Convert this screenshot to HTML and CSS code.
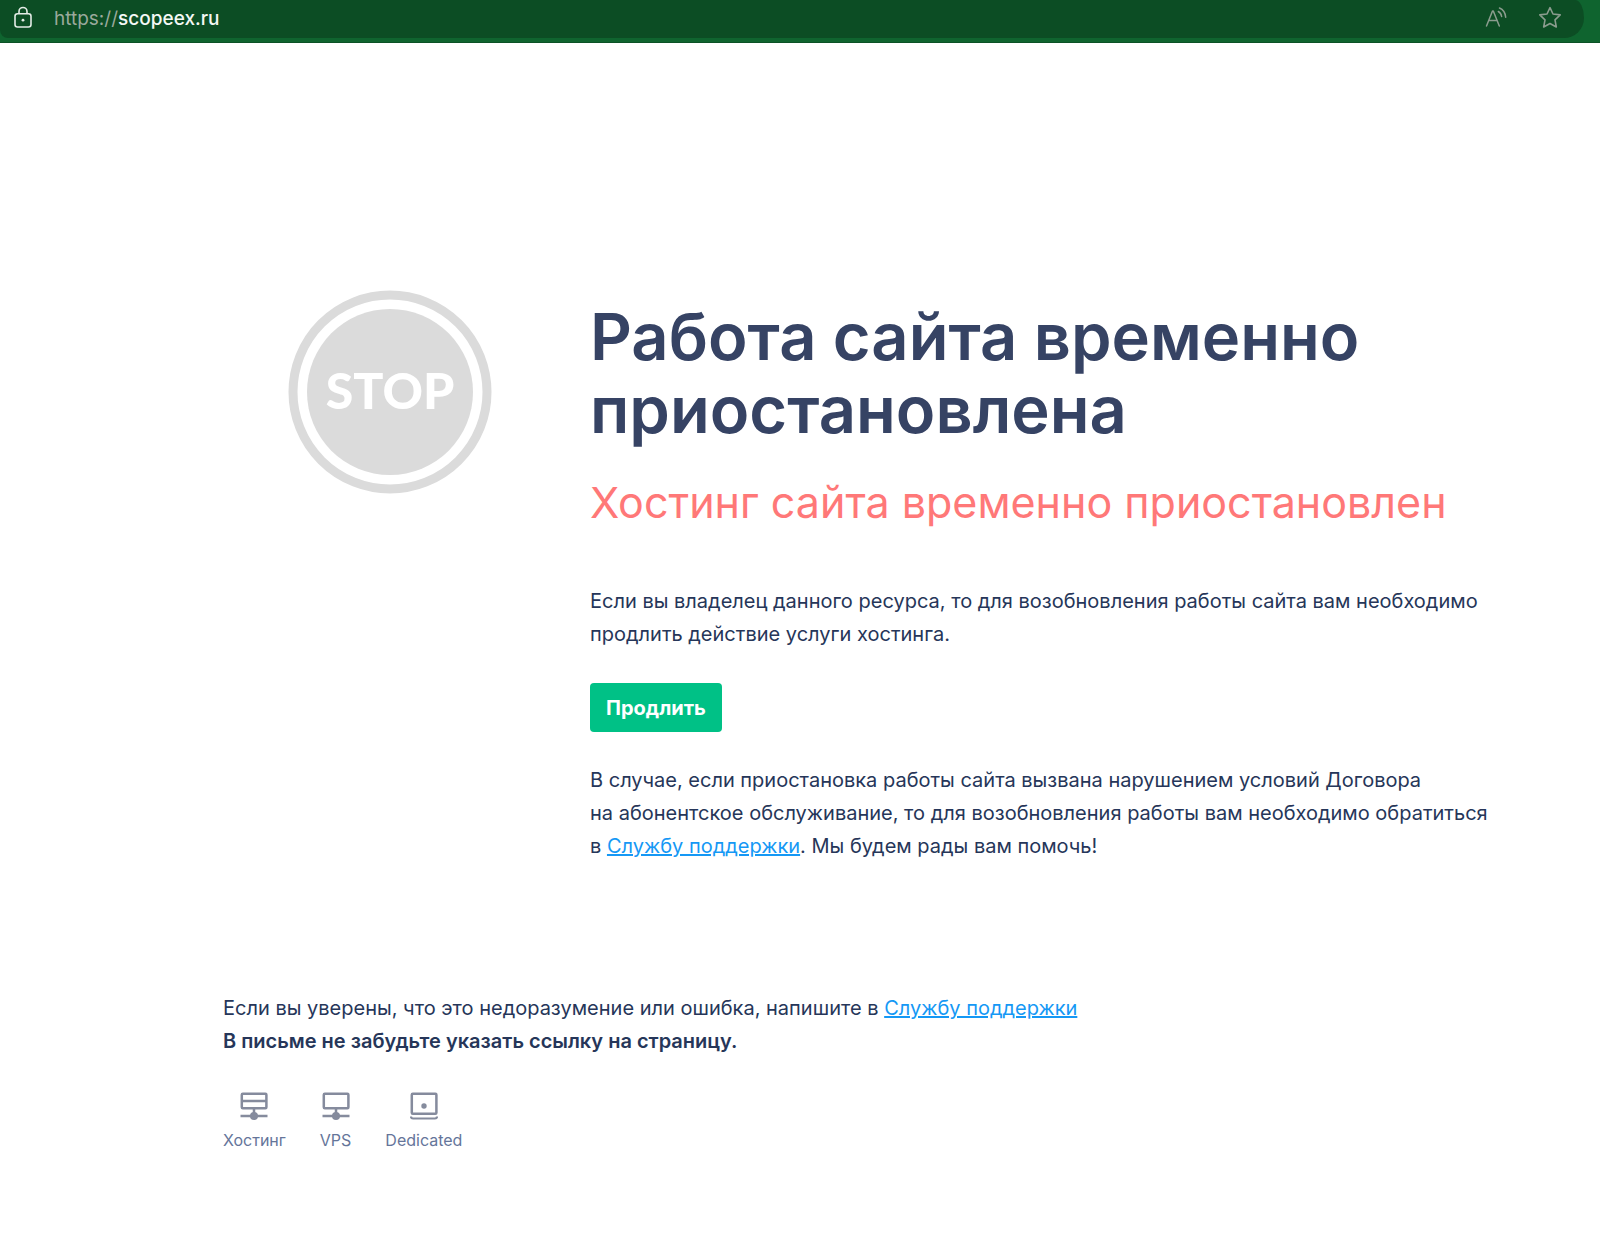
FILE: index.html
```
<!DOCTYPE html>
<html lang="ru">
<head>
<meta charset="utf-8">
<meta name="viewport" content="width=device-width, initial-scale=1">
<title>Работа сайта временно приостановлена</title>
<link rel="stylesheet" href="styles.css">
</head>
<body>
<header class="browser-bar">
  <div class="address">
    <svg class="lock" width="20" height="24" viewBox="0 0 20 24" fill="none" stroke="#e4ece6" stroke-width="1.6" aria-hidden="true">
      <rect x="2" y="7.800" width="16" height="13.200" rx="2.500"/>
      <path d="M6 7.800V5.500a4 4 0 0 1 8 0v2.300"/>
      <circle cx="10" cy="14.200" r="1.400" fill="#e4ece6" stroke="none"/>
    </svg>
    <span class="url"><span class="scheme">https://</span>scopeex.ru</span>
    <button class="tool" type="button" aria-label="Прочесть вслух">
      <svg width="24" height="24" viewBox="0 0 24 24" fill="none" stroke="#8b9c8e" stroke-width="1.500" stroke-linecap="round" stroke-linejoin="round" aria-hidden="true">
        <path d="M2.500 20 8.500 5h.8l6 15M4.700 14.500h8.400"/>
        <path d="M14.300 5.500c2 1 3 2.600 3.300 5M15.500 2c3.500 1.500 5.800 4.500 6.200 9.200"/>
      </svg>
    </button>
    <button class="tool" type="button" aria-label="Добавить в избранное">
      <svg width="24" height="24" viewBox="0 0 24 24" fill="none" stroke="#8b9c8e" stroke-width="1.600" stroke-linejoin="round" aria-hidden="true">
        <path d="M12 1.700l3 6.300 7.200.9-5.200 4.900 1.300 7.200L12 17.500l-6.300 3.500L7 13.800 1.800 8.900 9 8z"/>
      </svg>
    </button>
  </div>
</header>

<main class="page">
  <section class="notice">
    <svg class="stop" width="204" height="204" viewBox="0 0 204 204" role="img" aria-label="STOP">
      <circle cx="102" cy="102" r="97" fill="none" stroke="#dbdbdb" stroke-width="9"/>
      <circle cx="102" cy="102" r="83" fill="#dbdbdb"/>
      <text class="stop-text" x="102" y="119" text-anchor="middle">STOP</text>
    </svg>
    <div class="content">
      <h1 class="title">Работа сайта временно приостановлена</h1>
      <p class="subtitle">Хостинг сайта временно приостановлен</p>
      <p class="text">Если вы владелец данного ресурса, то для возобновления работы сайта вам необходимо продлить действие услуги хостинга.</p>
      <button class="renew" type="button">Продлить</button>
      <p class="text">В случае, если приостановка работы сайта вызвана нарушением условий Договора на&nbsp;абонентское обслуживание, то для возобновления работы вам необходимо обратиться в&nbsp;<a class="link" href="#">Службу поддержки</a>. Мы будем рады вам помочь!</p>
    </div>
  </section>

  <footer class="footer">
    <p class="text">Если вы уверены, что это недоразумение или ошибка, напишите в&nbsp;<a class="link" href="#">Службу поддержки</a><br><strong class="strong">В письме не забудьте указать ссылку на страницу.</strong></p>
    <nav class="services">
      <a class="service" href="#">
        <svg width="28" height="28" viewBox="0 0 28 28" fill="none" stroke="#858b9d" stroke-width="2.500" aria-hidden="true">
          <rect x="1.800" y="1.700" width="24.600" height="14.600" rx="1"/>
          <path d="M2 9h24M14 16v8M.5 24h27"/>
          <circle cx="14" cy="24" r="4" fill="#858b9d" stroke="none"/>
        </svg>
        Хостинг
      </a>
      <a class="service" href="#">
        <svg width="28" height="28" viewBox="0 0 28 28" fill="none" stroke="#858b9d" stroke-width="2.500" aria-hidden="true">
          <rect x="1.800" y="1.700" width="24.600" height="14.600" rx="1"/>
          <path d="M14 16v8M.5 24h27"/>
          <circle cx="14" cy="24" r="4" fill="#858b9d" stroke="none"/>
        </svg>
        VPS
      </a>
      <a class="service" href="#">
        <svg width="28" height="28" viewBox="0 0 28 28" fill="none" stroke="#858b9d" stroke-width="2.500" aria-hidden="true">
          <rect x="1.800" y="1.700" width="24.600" height="20" rx="1"/>
          <path d="M1 24.500q0 2 2 2h22q2 0 2-2" stroke-width="2.200"/>
          <circle cx="14" cy="14" r="2.700" fill="#858b9d" stroke="none"/>
        </svg>
        Dedicated
      </a>
    </nav>
  </footer>
</main>
</body>
</html>
```
FILE: styles.css
```
* {
  box-sizing: border-box;
}

body {
  margin: 0;
  background: #fff;
  color: #263659;
  font-family: Inter, "Liberation Sans", sans-serif;
}

.browser-bar {
  height: 43px;
  padding-right: 16px;
  background: #0f642f;
  border-bottom: 1px solid #0b5226;
}

.address {
  display: flex;
  align-items: center;
  height: 38px;
  padding: 0 22px 2px 13px;
  background: #0c4d24;
  border-radius: 0 9px 20px 8px / 0 18px 20px 8px;
}

.url {
  flex: 1;
  margin-left: 21px;
  color: #f4f8f5;
  font-size: 19px;
  font-weight: 500;
}

.scheme {
  color: #9aa99c;
  font-weight: 400;
}

.tool {
  display: flex;
  margin-left: 30px;
  padding: 0;
  border: 0;
  background: none;
}

.page {
  padding: 247px 88px 80px 223px;
}

.notice {
  display: flex;
  align-items: flex-start;
}

.stop {
  flex: none;
  margin: 0 98px 0 65px;
}

.stop-text {
  fill: #fff;
  font-family: Lato, sans-serif;
  font-size: 50px;
  font-weight: 900;
}

.content {
  flex: 1;
  padding-top: 10px;
}

.title {
  margin: 0;
  color: #364364;
  font-size: 65px;
  font-weight: 600;
  line-height: 73px;
}

.subtitle {
  margin: 28px 0 55px;
  color: #ff7878;
  font-size: 43px;
  line-height: 56px;
}

.text {
  margin: 0;
  font-size: 20px;
  line-height: 33px;
}

.link {
  color: #1598f5;
  text-decoration: underline;
}

.renew {
  height: 49px;
  margin: 32px 0;
  padding: 0 16px;
  border: 0;
  border-radius: 4px;
  background: #00c186;
  color: #fff;
  font: 700 20px Inter, "Liberation Sans", sans-serif;
}

.footer {
  padding-top: 129px;
}

.strong {
  font-weight: 600;
}

.services {
  display: flex;
  gap: 34px;
  margin-top: 34px;
}

.service {
  display: flex;
  flex-direction: column;
  align-items: center;
  gap: 10px;
  color: #65759a;
  font-size: 16px;
  line-height: 20px;
  text-decoration: none;
}
```
